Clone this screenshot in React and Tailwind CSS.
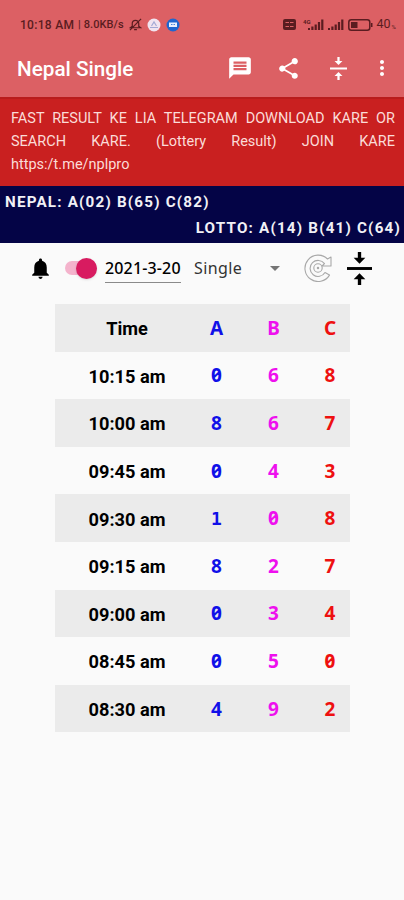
import { MdMessage, MdShare, MdMoreVert, MdNotifications } from 'react-icons/md';

const RESULTS = [
  { time: '10:15 am', a: 0, b: 6, c: 8 },
  { time: '10:00 am', a: 8, b: 6, c: 7 },
  { time: '09:45 am', a: 0, b: 4, c: 3 },
  { time: '09:30 am', a: 1, b: 0, c: 8 },
  { time: '09:15 am', a: 8, b: 2, c: 7 },
  { time: '09:00 am', a: 0, b: 3, c: 4 },
  { time: '08:45 am', a: 0, b: 5, c: 0 },
  { time: '08:30 am', a: 4, b: 9, c: 2 },
];

function CollapseIcon({ className }) {
  return (
    <svg viewBox="0 0 24 34" preserveAspectRatio="none" fill="currentColor" className={className}>
      <path d="M10.4 0h3.2v6h4L12 12 6.4 6h4z" />
      <path d="M0 15.5h24v3H0z" />
      <path d="M10.4 34h3.2v-6h4L12 22l-5.6 6h4z" />
    </svg>
  );
}

function SignalBars() {
  return (
    <svg viewBox="0 0 16 11" fill="currentColor" className="h-[11px] w-4">
      <path d="M0 9h2v2H0zM3.3 7.5h2.2V11H3.3zM6.6 5.5h2.2V11H6.6zM9.9 3h2.2v8H9.9zM13.2 .5h2.2V11h-2.2z" />
    </svg>
  );
}

function StatusBar() {
  return (
    <div className="flex h-[49px] items-center pl-5 text-[#5a1c20]">
      <div className="flex items-center font-medium">
        <span className="w-[58px] whitespace-nowrap text-[12px] tracking-[0.3px]">10:18 AM</span>
        <span className="w-[49px] whitespace-nowrap pt-px text-[11px] tracking-[0.1px]">| 8.0KB/s</span>
        <svg viewBox="0 0 14 14" className="ml-[2px] h-[13px] w-[13px]" fill="none" stroke="currentColor" strokeWidth="1.3">
          <path d="M1.5 10.5h11L10.5 9V6a3.5 3.5 0 0 0-7 0v3zM5.5 12.5h3M1 13 13 1" />
        </svg>
      </div>
      <svg viewBox="0 0 14 14" className="ml-[5px] h-[14px] w-[14px]">
        <circle cx="7" cy="7" r="6.5" fill="#f1e4f0" />
        <path d="M3 9.5h8M4.5 8 7 4l2.5 4" fill="none" stroke="#a3aad6" strokeWidth="1.2" />
      </svg>
      <svg viewBox="0 0 14 14" className="ml-[5px] h-[14px] w-[14px]">
        <circle cx="7" cy="7" r="6.5" fill="#1f66cf" />
        <path d="M3 4.5h8V9H3z" fill="#e8f0ff" />
        <path d="M5 6.5h1.5M7.5 6.5H9" stroke="#1f66cf" strokeWidth="0.8" />
      </svg>
      <div className="ml-[103px] flex items-center">
        <svg viewBox="0 0 13 11" className="h-[11px] w-[13px]">
          <rect width="13" height="11" rx="2" fill="currentColor" />
          <path d="M2.5 3.5H6M7 3.5h3.5M2.5 7.5H6M7 7.5h3.5" stroke="#dc6064" strokeWidth="1" />
        </svg>
        <span className="-mr-[3px] -mt-[7px] ml-[7px] text-[6px] font-bold">4G</span>
        <SignalBars />
        <span className="w-[4px]" />
        <SignalBars />
        <svg viewBox="0 0 25 12" className="ml-[4px] h-[12px] w-[25px]">
          <rect x=".8" y=".8" width="21" height="10.4" rx="2.5" fill="none" stroke="currentColor" strokeWidth="1.5" />
          <rect x="3" y="3" width="6.5" height="6" fill="currentColor" />
          <path d="M23 4h1.5v4H23z" fill="currentColor" />
        </svg>
        <span className="ml-[4px] text-[12.5px]">40</span>
        <span className="ml-[1px] mt-[3px] text-[6px]">%</span>
      </div>
    </div>
  );
}

function AppBar() {
  return (
    <div className="flex h-[40px] items-center pl-[17px] text-white">
      <h1 className="w-[210px] pt-px text-[20.7px] font-medium">Nepal Single</h1>
      <MdMessage className="-mt-[2px] h-[26px] w-[26px]" />
      <MdShare className="-mt-[2px] ml-[23px] h-[25px] w-[25px]" />
      <CollapseIcon className="-mt-[2px] ml-[29px] h-[23px] w-[17px]" />
      <MdMoreVert className="-mt-[2px] ml-[23px] h-[24px] w-[24px]" />
    </div>
  );
}

function Filters() {
  return (
    <div className="flex h-[61px] items-start pl-[28px] pt-[9px]">
      <MdNotifications className="mt-[4px] h-[25px] w-[25px] text-black" />
      <div className="relative ml-[12px] mt-[9px] h-[14px] w-[32px] rounded-full bg-[#f4b3cc]">
        <div className="absolute -top-[3.5px] right-0 h-[21px] w-[21px] rounded-full bg-[#d81b60] shadow-sm" />
      </div>
      <div className="ml-[8px] h-[31px] w-[76px] whitespace-nowrap border-b border-[#8a8a8a] font-['Noto_Sans',sans-serif] text-[16px] font-medium leading-[32px] tracking-[0.15px] text-black">
        2021-3-20
      </div>
      <div className="ml-[13px] w-[76px] font-['Noto_Sans',sans-serif] text-[16px] leading-[32px] tracking-[0.4px] text-[#333]">
        Single
      </div>
      <svg viewBox="0 0 10 5" className="mt-[14px] h-[5px] w-[10px]" fill="#757575">
        <path d="M0 0h10L5 5z" />
      </svg>
      {/* outlined reload arrow around a ring */}
      <svg viewBox="0 0 28 28" className="ml-[24px] mt-[2px] h-[28px] w-[28px]" fill="none" stroke="#a8a8a8" strokeWidth="1.1" strokeLinejoin="round">
        <path d="M23.5 5 27 3v9h-9l2.5-2.4A8 8 0 1 0 21 18.5l4.5 2.6A13.2 13.2 0 1 1 23.5 5z" />
        <circle cx="14" cy="14" r="4.2" />
        <circle cx="14" cy="14" r=".7" />
      </svg>
      <CollapseIcon className="ml-[15px] h-[33px] w-[25px] text-black" />
    </div>
  );
}

// "1" is drawn with a foot so it keeps the look of the other fixed width digits
function Digit({ value }) {
  return <span className={value === 1 ? "font-['DejaVu_Sans_Mono',monospace] text-[18px]" : ''}>{value}</span>;
}

export default function App() {
  return (
    <div className="min-h-[900px] w-[404px] overflow-hidden bg-[#fafafa] font-[Roboto,sans-serif]">
      <header className="h-[97px] bg-[#dc6064]">
        <StatusBar />
        <AppBar />
      </header>

      <div className="h-[89px] border-t-2 border-[#b91c1c] bg-[#c92020] pl-[11px] pr-[9px] pt-[8px] text-justify text-[14.5px] leading-[23px] text-[#fbdcd8]">
        FAST RESULT KE LIA TELEGRAM DOWNLOAD KARE OR SEARCH KARE. (Lottery Result) JOIN KARE https:/t.me/nplpro
      </div>

      <div className="h-[57px] bg-[#040446] pl-[5px] pr-[4px] pt-[3px] text-[15.2px] font-bold leading-[26px] tracking-[1.2px] text-[#f1f1f6]">
        <div>NEPAL: A(02) B(65) C(82)</div>
        <div className="-mr-[1px] text-right">LOTTO: A(14) B(41) C(64)</div>
      </div>

      <Filters />

      <table className="ml-[55px] w-[295px] table-fixed border-collapse text-center text-[19px] font-bold leading-[27px]">
        <colgroup>
          <col className="w-[133px]" />
          <col className="w-[57px]" />
          <col className="w-[57px]" />
          <col className="w-[48px]" />
        </colgroup>
        <tbody className="font-['Noto_Sans',sans-serif] slashed-zero">
          <tr className="h-[47.6px] bg-[#ebebeb]">
            <td className="p-0 pl-[11px] pt-[2px] font-[Roboto,sans-serif] text-[18.2px] text-black">Time</td>
            <td className="p-0 pt-[1px] text-[#1010e8]">A</td>
            <td className="p-0 pt-[1px] text-[#ee10ee]">B</td>
            <td className="p-0 pl-[8px] pt-[1px] text-[#ee1010]">C</td>
          </tr>
          {RESULTS.map((row) => (
            <tr key={row.time} className="h-[47.6px] odd:bg-[#ebebeb]">
              <td className="p-0 pl-[11px] pt-[2px] font-[Roboto,sans-serif] text-[18.2px] text-black">{row.time}</td>
              <td className="p-0 pt-[1px] text-[#1010e8]"><Digit value={row.a} /></td>
              <td className="p-0 pt-[1px] text-[#ee10ee]"><Digit value={row.b} /></td>
              <td className="p-0 pl-[8px] pt-[1px] text-[#ee1010]"><Digit value={row.c} /></td>
            </tr>
          ))}
        </tbody>
      </table>
    </div>
  );
}
